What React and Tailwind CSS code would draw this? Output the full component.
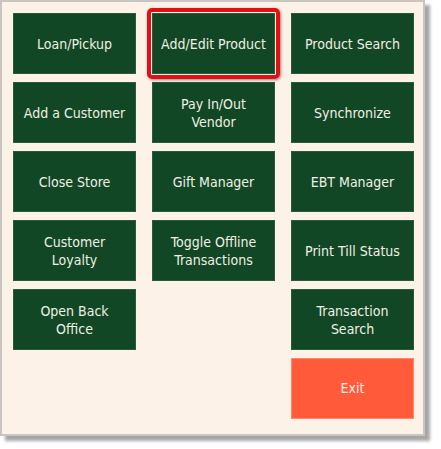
import React from "react";

const columns = [
  ["Loan/Pickup", "Add a Customer", "Close Store", "Customer Loyalty", "Open Back Office"],
  ["Add/Edit Product", "Pay In/Out Vendor", "Gift Manager", "Toggle Offline Transactions"],
  ["Product Search", "Synchronize", "EBT Manager", "Print Till Status", "Transaction Search"],
];

const TileButton = ({ label, highlight }) => (
  <div className="relative">
    {highlight && (
      <div className="absolute -inset-[5px] rounded-[5px] border-[4px] border-[#e30f14] shadow-[1px_1px_3px_rgba(0,0,0,0.45)]" />
    )}
    <button className="flex h-[61px] w-[123px] items-center justify-center border border-[#2a5a3a] bg-[#114724] px-2 text-center text-[14px] leading-[18px] text-[#f2efe6]">
      {label}
    </button>
  </div>
);

export default function App() {
  return (
    <div className="h-[449px] w-[441px] bg-white" style={{ fontFamily: '"DejaVu Sans Condensed", "DejaVu Sans", sans-serif' }}>
      <div className="h-[436px] w-[425px] border-2 border-[#c9c5c2] bg-[#fdf2e7] shadow-[5px_5px_3px_rgba(0,0,0,0.35)]">
        <div className="flex gap-4 pl-[11px] pt-[11px]">
          {columns.map((col, i) => (
            <div key={i} className="flex flex-col gap-2">
              {col.map((label) => (
                <TileButton key={label} label={label} highlight={label === "Add/Edit Product"} />
              ))}
              {i === 2 && (
                <button className="h-[61px] w-[123px] border border-[#ff8a6c] bg-[#ff5a3a] text-[14px] text-[#fbeee6]">
                  Exit
                </button>
              )}
            </div>
          ))}
        </div>
      </div>
    </div>
  );
}
